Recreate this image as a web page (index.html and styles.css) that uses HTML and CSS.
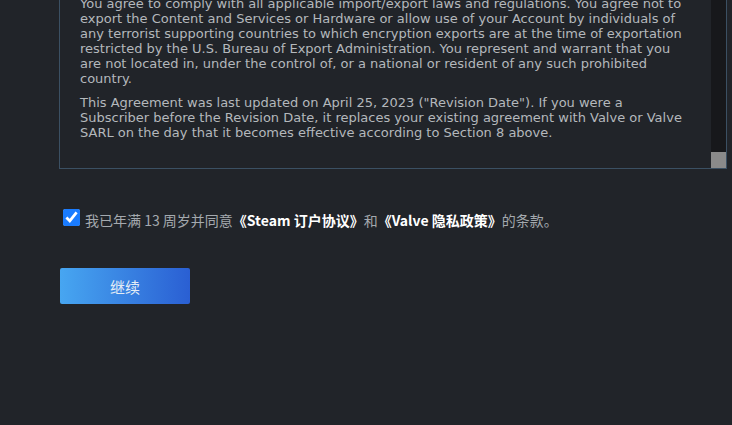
FILE: index.html
```html
<!DOCTYPE html>
<html lang="zh-CN">
<head>
<meta charset="utf-8">
<link rel="stylesheet" href="styles.css">
</head>
<body>
<div class="page">
  <div class="agreement">
    <div class="agreement-text">
      <p>You agree to comply with all applicable import/export laws and regulations. You agree not to export the Content and Services or Hardware or allow use of your Account by individuals of any terrorist supporting countries to which encryption exports are at the time of exportation restricted by the U.S. Bureau of Export Administration. You represent and warrant that you are not located in, under the control of, or a national or resident of any such prohibited country.</p>
      <p>This Agreement was last updated on April 25, 2023 ("Revision Date"). If you were a Subscriber before the Revision Date, it replaces your existing agreement with Valve or Valve SARL on the day that it becomes effective according to Section 8 above.</p>
    </div>
    <div class="scrollbar"><div class="thumb"></div></div>
  </div>
  <label class="agree">
    <input type="checkbox" checked>
    <span class="agree-text">我已年满 13 周岁并同意<a class="link">《Steam 订户协议》</a>和<a class="link">《Valve 隐私政策》</a>的条款。</span>
  </label>
  <button class="continue">继续</button>
</div>
</body>
</html>
```
FILE: styles.css
```css
html, body {
  margin: 0;
  padding: 0;
  background: #212429;
  height: 100%;
}
.page {
  padding-left: 59px;
  font-family: "DejaVu Sans", "Noto Sans CJK SC", sans-serif;
}
.agreement {
  width: 666px;
  height: 168px;
  border: 1px solid #3b5063;
  border-top: none;
  display: flex;
}
.agreement-text {
  flex: 1;
  display: flex;
  flex-direction: column;
  justify-content: flex-end;
  overflow: hidden;
  padding: 0 24px 28px 20px;
  color: #b4b8bc;
  font-size: 13px;
  line-height: 15px;
}
.agreement-text p {
  margin: 9px 0 0 0;
}
.scrollbar {
  width: 15px;
  background: #17181b;
  display: flex;
  flex-direction: column;
  justify-content: flex-end;
}
.thumb {
  height: 16px;
  background: #8a8a8a;
}
.agree {
  display: flex;
  align-items: flex-start;
  margin-top: 40px;
  margin-left: 3px;
  color: #a4a9ae;
  font-family: "Noto Sans CJK SC", sans-serif;
  font-size: 14px;
  line-height: 20px;
}
.agree input {
  width: 17px;
  height: 17px;
  margin: 0 5px 0 1px;
  accent-color: #1a7cff;
}
.agree-text {
  padding-top: 1px;
}
.link {
  color: #ffffff;
  font-weight: 600;
}
.continue {
  display: block;
  margin-top: 38px;
  margin-left: 1px;
  width: 130px;
  height: 36px;
  border: none;
  border-radius: 2px;
  background: linear-gradient(90deg, #47a6f1 0%, #2a5fd3 100%);
  color: #e3ecf5;
  font-family: "Noto Sans CJK SC", sans-serif;
  font-size: 15px;
}
```
